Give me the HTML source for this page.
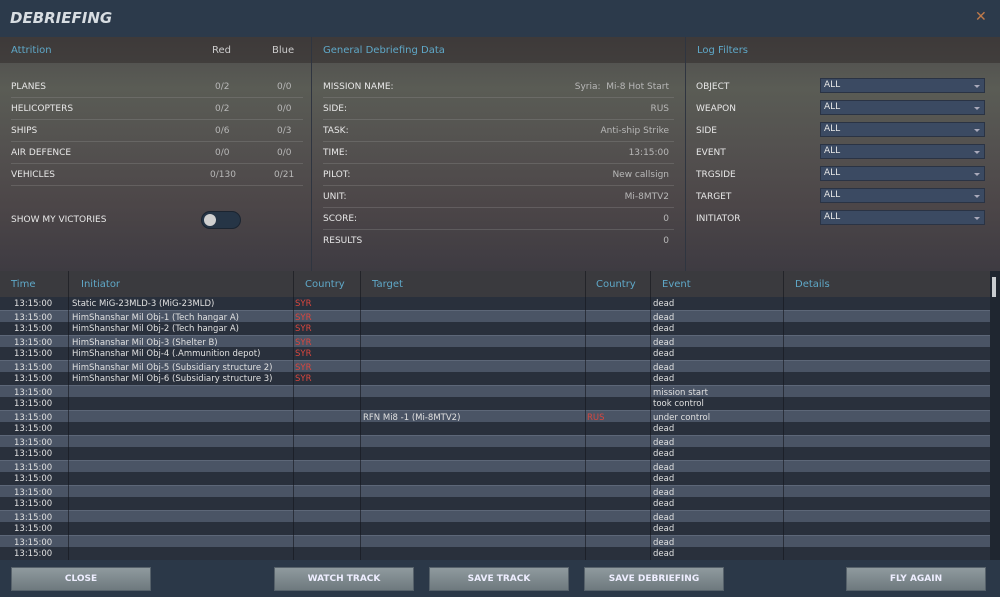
<!DOCTYPE html>
<html><head><meta charset="utf-8"><style>
*{margin:0;padding:0;box-sizing:border-box}
body{width:1000px;height:597px;overflow:hidden;background:#2b3848;font-family:"DejaVu Sans","Liberation Sans",sans-serif;color:#d8dadc;position:relative}
.a{position:absolute;white-space:nowrap}
#title{left:0;top:0;width:1000px;height:37px;background:#2c3a4b}
#top{left:0;top:37px;width:1000px;height:234px;background:linear-gradient(180deg,#4e4c4c 0%,#5a5c55 22%,#545250 45%,#4c4648 72%,#3e3b42 100%)}
.hdr{top:37px;height:26px;background:rgba(45,40,40,.5)}
.cy{color:#5fa8c8;font-size:10px}
.lab{font-size:9px;color:#e8e8e8}
.val{font-size:9px;color:#b8b8b8}
.sep{height:1px;background:rgba(150,150,150,.3)}
.sel{left:820px;width:165px;height:15px;background:#3b4a62;border:1px solid #2a3344;font-size:9px;color:#e6e6e6;padding:1px 0 0 3px}
.sel:after{content:"";position:absolute;right:4px;top:6px;border-left:3px solid transparent;border-right:3px solid transparent;border-top:3px solid #aab}
#tbl{left:0;top:271px;width:990px;height:289px;background:#363c48}
.row{left:0;width:990px;height:13px;font-size:8.5px;color:#e0e0e0;line-height:14px}
.r0{background:#29303c}.r1{background:#4a5465;border-top:1px solid #5d6778}
.row span{position:absolute}
.red{color:#d8463e}
.vl{top:271px;width:1px;height:289px;background:rgba(20,22,28,.6)}
.btn{top:567px;height:24px;background:linear-gradient(#8f9a9e,#6e797e);border:1px solid #56616a;font-size:9px;font-weight:bold;color:#eef;text-align:center;line-height:23px}
</style></head><body>
<div class="a" id="title"></div>
<div class="a" style="left:10px;top:9px;font-size:15px;font-weight:bold;font-style:italic;color:#d8dde2">DEBRIEFING</div>
<div class="a" style="left:975px;top:9px;font-size:14px;color:#c07a4a">✕</div>
<div class="a" id="top"></div>
<div class="a hdr" style="left:0;width:1000px"></div>
<div class="a" style="left:311px;top:37px;width:1px;height:234px;background:#2f3540"></div>
<div class="a" style="left:685px;top:37px;width:1px;height:234px;background:#2f3540"></div>
<div class="a cy" style="left:11px;top:45px">Attrition</div>
<div class="a" style="left:212px;top:45px;font-size:10px;color:#ccc">Red</div>
<div class="a" style="left:272px;top:45px;font-size:10px;color:#ccc">Blue</div>
<div class="a cy" style="left:323px;top:45px">General Debriefing Data</div>
<div class="a cy" style="left:697px;top:45px">Log Filters</div>

<div class="a lab" style="left:11px;top:82px">PLANES</div><div class="a val" style="left:215px;top:82px">0/2</div><div class="a val" style="left:277px;top:82px">0/0</div>
<div class="a sep" style="left:11px;top:97px;width:292px"></div>
<div class="a lab" style="left:11px;top:104px">HELICOPTERS</div><div class="a val" style="left:215px;top:104px">0/2</div><div class="a val" style="left:277px;top:104px">0/0</div>
<div class="a sep" style="left:11px;top:119px;width:292px"></div>
<div class="a lab" style="left:11px;top:126px">SHIPS</div><div class="a val" style="left:215px;top:126px">0/6</div><div class="a val" style="left:277px;top:126px">0/3</div>
<div class="a sep" style="left:11px;top:141px;width:292px"></div>
<div class="a lab" style="left:11px;top:148px">AIR DEFENCE</div><div class="a val" style="left:215px;top:148px">0/0</div><div class="a val" style="left:277px;top:148px">0/0</div>
<div class="a sep" style="left:11px;top:163px;width:292px"></div>
<div class="a lab" style="left:11px;top:170px">VEHICLES</div><div class="a val" style="left:210px;top:170px">0/130</div><div class="a val" style="left:274px;top:170px">0/21</div>
<div class="a sep" style="left:11px;top:185px;width:292px"></div>
<div class="a lab" style="left:11px;top:215px">SHOW MY VICTORIES</div>
<div class="a" style="left:201px;top:211px;width:40px;height:18px;border-radius:9px;background:#263546;border:1px solid #1b2430"></div>
<div class="a" style="left:204px;top:214px;width:12px;height:12px;border-radius:6px;background:#d0d0d0"></div>

<div class="a lab" style="left:323px;top:82px">MISSION NAME:</div><div class="a val" style="right:331px;top:82px">Syria:&nbsp; Mi-8 Hot Start</div>
<div class="a sep" style="left:323px;top:97px;width:351px"></div>
<div class="a lab" style="left:323px;top:104px">SIDE:</div><div class="a val" style="right:331px;top:104px">RUS</div>
<div class="a sep" style="left:323px;top:119px;width:351px"></div>
<div class="a lab" style="left:323px;top:126px">TASK:</div><div class="a val" style="right:331px;top:126px">Anti-ship Strike</div>
<div class="a sep" style="left:323px;top:141px;width:351px"></div>
<div class="a lab" style="left:323px;top:148px">TIME:</div><div class="a val" style="right:331px;top:148px">13:15:00</div>
<div class="a sep" style="left:323px;top:163px;width:351px"></div>
<div class="a lab" style="left:323px;top:170px">PILOT:</div><div class="a val" style="right:331px;top:170px">New callsign</div>
<div class="a sep" style="left:323px;top:185px;width:351px"></div>
<div class="a lab" style="left:323px;top:192px">UNIT:</div><div class="a val" style="right:331px;top:192px">Mi-8MTV2</div>
<div class="a sep" style="left:323px;top:207px;width:351px"></div>
<div class="a lab" style="left:323px;top:214px">SCORE:</div><div class="a val" style="right:331px;top:214px">0</div>
<div class="a sep" style="left:323px;top:229px;width:351px"></div>
<div class="a lab" style="left:323px;top:236px">RESULTS</div><div class="a val" style="right:331px;top:236px">0</div>

<div class="a lab" style="left:696px;top:82px">OBJECT</div><div class="a sel" style="top:78px">ALL</div>
<div class="a lab" style="left:696px;top:104px">WEAPON</div><div class="a sel" style="top:100px">ALL</div>
<div class="a lab" style="left:696px;top:126px">SIDE</div><div class="a sel" style="top:122px">ALL</div>
<div class="a lab" style="left:696px;top:148px">EVENT</div><div class="a sel" style="top:144px">ALL</div>
<div class="a lab" style="left:696px;top:170px">TRGSIDE</div><div class="a sel" style="top:166px">ALL</div>
<div class="a lab" style="left:696px;top:192px">TARGET</div><div class="a sel" style="top:188px">ALL</div>
<div class="a lab" style="left:696px;top:214px">INITIATOR</div><div class="a sel" style="top:210px">ALL</div>

<div class="a" id="tbl"></div>
<div class="a" style="left:0;top:271px;width:990px;height:26px;background:#3a3a3e"></div>
<div class="a cy" style="left:11px;top:279px">Time</div>
<div class="a cy" style="left:81px;top:279px">Initiator</div>
<div class="a cy" style="left:305px;top:279px">Country</div>
<div class="a cy" style="left:372px;top:279px">Target</div>
<div class="a cy" style="left:596px;top:279px">Country</div>
<div class="a cy" style="left:662px;top:279px">Event</div>
<div class="a cy" style="left:795px;top:279px">Details</div>

<div class="a row r0" style="top:297px"><span style="left:14px">13:15:00</span><span style="left:72px">Static MiG-23MLD-3 (MiG-23MLD)</span><span class="red" style="left:295px">SYR</span><span style="left:653px">dead</span></div>
<div class="a row r1" style="top:309.5px"><span style="left:14px">13:15:00</span><span style="left:72px">HimShanshar Mil Obj-1 (Tech hangar A)</span><span class="red" style="left:295px">SYR</span><span style="left:653px">dead</span></div>
<div class="a row r0" style="top:322px"><span style="left:14px">13:15:00</span><span style="left:72px">HimShanshar Mil Obj-2 (Tech hangar A)</span><span class="red" style="left:295px">SYR</span><span style="left:653px">dead</span></div>
<div class="a row r1" style="top:334.5px"><span style="left:14px">13:15:00</span><span style="left:72px">HimShanshar Mil Obj-3 (Shelter B)</span><span class="red" style="left:295px">SYR</span><span style="left:653px">dead</span></div>
<div class="a row r0" style="top:347px"><span style="left:14px">13:15:00</span><span style="left:72px">HimShanshar Mil Obj-4 (.Ammunition depot)</span><span class="red" style="left:295px">SYR</span><span style="left:653px">dead</span></div>
<div class="a row r1" style="top:359.5px"><span style="left:14px">13:15:00</span><span style="left:72px">HimShanshar Mil Obj-5 (Subsidiary structure 2)</span><span class="red" style="left:295px">SYR</span><span style="left:653px">dead</span></div>
<div class="a row r0" style="top:372px"><span style="left:14px">13:15:00</span><span style="left:72px">HimShanshar Mil Obj-6 (Subsidiary structure 3)</span><span class="red" style="left:295px">SYR</span><span style="left:653px">dead</span></div>
<div class="a row r1" style="top:384.5px"><span style="left:14px">13:15:00</span><span style="left:653px">mission start</span></div>
<div class="a row r0" style="top:397px"><span style="left:14px">13:15:00</span><span style="left:653px">took control</span></div>
<div class="a row r1" style="top:409.5px"><span style="left:14px">13:15:00</span><span style="left:363px">RFN Mi8 -1 (Mi-8MTV2)</span><span class="red" style="left:587px">RUS</span><span style="left:653px">under control</span></div>
<div class="a row r0" style="top:422px"><span style="left:14px">13:15:00</span><span style="left:653px">dead</span></div>
<div class="a row r1" style="top:434.5px"><span style="left:14px">13:15:00</span><span style="left:653px">dead</span></div>
<div class="a row r0" style="top:447px"><span style="left:14px">13:15:00</span><span style="left:653px">dead</span></div>
<div class="a row r1" style="top:459.5px"><span style="left:14px">13:15:00</span><span style="left:653px">dead</span></div>
<div class="a row r0" style="top:472px"><span style="left:14px">13:15:00</span><span style="left:653px">dead</span></div>
<div class="a row r1" style="top:484.5px"><span style="left:14px">13:15:00</span><span style="left:653px">dead</span></div>
<div class="a row r0" style="top:497px"><span style="left:14px">13:15:00</span><span style="left:653px">dead</span></div>
<div class="a row r1" style="top:509.5px"><span style="left:14px">13:15:00</span><span style="left:653px">dead</span></div>
<div class="a row r0" style="top:522px"><span style="left:14px">13:15:00</span><span style="left:653px">dead</span></div>
<div class="a row r1" style="top:534.5px"><span style="left:14px">13:15:00</span><span style="left:653px">dead</span></div>
<div class="a row r0" style="top:547px"><span style="left:14px">13:15:00</span><span style="left:653px">dead</span></div>

<div class="a vl" style="left:68px"></div>
<div class="a vl" style="left:293px"></div>
<div class="a vl" style="left:360px"></div>
<div class="a vl" style="left:585px"></div>
<div class="a vl" style="left:650px"></div>
<div class="a vl" style="left:783px"></div>
<div class="a" style="left:990px;top:271px;width:10px;height:289px;background:#1f2630"></div>
<div class="a" style="left:992px;top:277px;width:4px;height:20px;background:#c8ccd0"></div>

<div class="a btn" style="left:11px;width:140px">CLOSE</div>
<div class="a btn" style="left:274px;width:140px">WATCH TRACK</div>
<div class="a btn" style="left:429px;width:140px">SAVE TRACK</div>
<div class="a btn" style="left:584px;width:140px">SAVE DEBRIEFING</div>
<div class="a btn" style="left:846px;width:140px">FLY AGAIN</div>
</body></html>
